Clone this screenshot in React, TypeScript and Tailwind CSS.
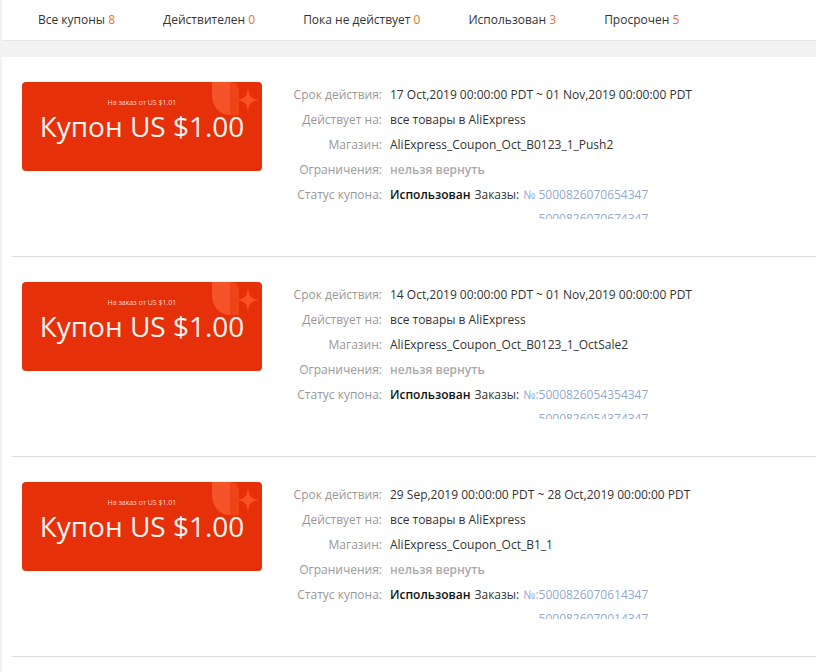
import React from 'react';

const tabs = [
  { label: 'Все купоны', count: 8 },
  { label: 'Действителен', count: 0 },
  { label: 'Пока не действует', count: 0 },
  { label: 'Использован', count: 3 },
  { label: 'Просрочен', count: 5 },
];

const coupons = [
  {
    period: '17 Oct,2019 00:00:00 PDT ~ 01 Nov,2019 00:00:00 PDT',
    store: 'AliExpress_Coupon_Oct_B0123_1_Push2',
    orders: ['№ 5000826070654347', '5000826070674347'],
  },
  {
    period: '14 Oct,2019 00:00:00 PDT ~ 01 Nov,2019 00:00:00 PDT',
    store: 'AliExpress_Coupon_Oct_B0123_1_OctSale2',
    orders: ['№:5000826054354347', '5000826054374347'],
  },
  {
    period: '29 Sep,2019 00:00:00 PDT ~ 28 Oct,2019 00:00:00 PDT',
    store: 'AliExpress_Coupon_Oct_B1_1',
    orders: ['№:5000826070614347', '5000826070014347'],
  },
];

const CornerDecor = () => (
  <svg className="absolute right-0 top-0" width="52" height="48" viewBox="0 0 52 48">
    <path d="M2 0 H20 V33 C9 33 2 24 2 13 Z" fill="#ff6a3d" opacity="0.6" />
    <path d="M20 0 C27 0 29 4 29 10 V33 H20 Z" fill="#f04a1c" opacity="0.8" />
    <path d="M38 6 C39 14 41 17 49 18 C41 19 39 22 38 30 C37 22 35 19 27 18 C35 17 37 14 38 6 Z" fill="#ff5a2a" opacity="0.8" />
    <path d="M20 33 C28 33 33 38 33 48 H20 Z" fill="#ec3c10" opacity="0.5" />
  </svg>
);

const Label = ({ children }: { children: React.ReactNode }) => (
  <div className="w-[98px] shrink-0 whitespace-nowrap pr-[8px] text-right text-[#999]">{children}</div>
);

const Row = ({ label, children }: { label: string; children: React.ReactNode }) => (
  <div className="flex h-[25px] items-start">
    <Label>{label}</Label>
    <div className="whitespace-nowrap text-[#333]">{children}</div>
  </div>
);

export default function App() {
  return (
    <div className="flex min-h-[672px] flex-col bg-[#f2f2f2] pl-[2px] text-[12px]" style={{ fontFamily: '"Open Sans", sans-serif' }}>
      <div className="flex h-[41px] items-center gap-[48px] border-b border-[#e6e6e6] bg-white pl-[36px] text-[12px] text-[#333]">
        {tabs.map((t) => (
          <div key={t.label}>
            {t.label} <span className="text-[#f0702a]">{t.count}</span>
          </div>
        ))}
      </div>
      <div className="mt-[16px] flex-1 bg-white pl-[10px]">
        {coupons.map((c, i) => (
          <div key={i} className="flex h-[200px] border-b border-[#dcdcdc] pt-[25px]">
            <div className="ml-[10px] w-[240px] shrink-0">
              <div className="relative flex h-[89px] flex-col items-center overflow-hidden rounded-[4px] bg-[#e5300a] pt-[16px] text-white">
                <CornerDecor />
                <div className="relative text-[7px] leading-[10px] text-[#ffd9cc]">На заказ от US $1.01</div>
                <div className="relative mt-[1px] text-[28px] leading-[34px] text-[#fff3ee]">Купон US $1.00</div>
              </div>
            </div>
            <div className="ml-[30px] pt-[4px] leading-[18px]">
              <Row label="Срок действия:">{c.period}</Row>
              <Row label="Действует на:">все товары в AliExpress</Row>
              <Row label="Магазин:">{c.store}</Row>
              <Row label="Ограничения:">
                <span className="font-semibold text-[#aaa]">нельзя вернуть</span>
              </Row>
              <div className="flex items-start">
                <Label>Статус купона:</Label>
                <div className="flex whitespace-nowrap text-[#333]">
                  <span className="font-semibold text-[#111]">Использован</span>
                  <span className="ml-[4px]">Заказы:</span>
                  <div className="ml-[4px] h-[33px] overflow-hidden text-[#4a70b0] opacity-60">
                    <div className="h-[24px]">{c.orders[0]}</div>
                    <div className="text-right">{c.orders[1]}</div>
                  </div>
                </div>
              </div>
            </div>
          </div>
        ))}
      </div>
    </div>
  );
}
